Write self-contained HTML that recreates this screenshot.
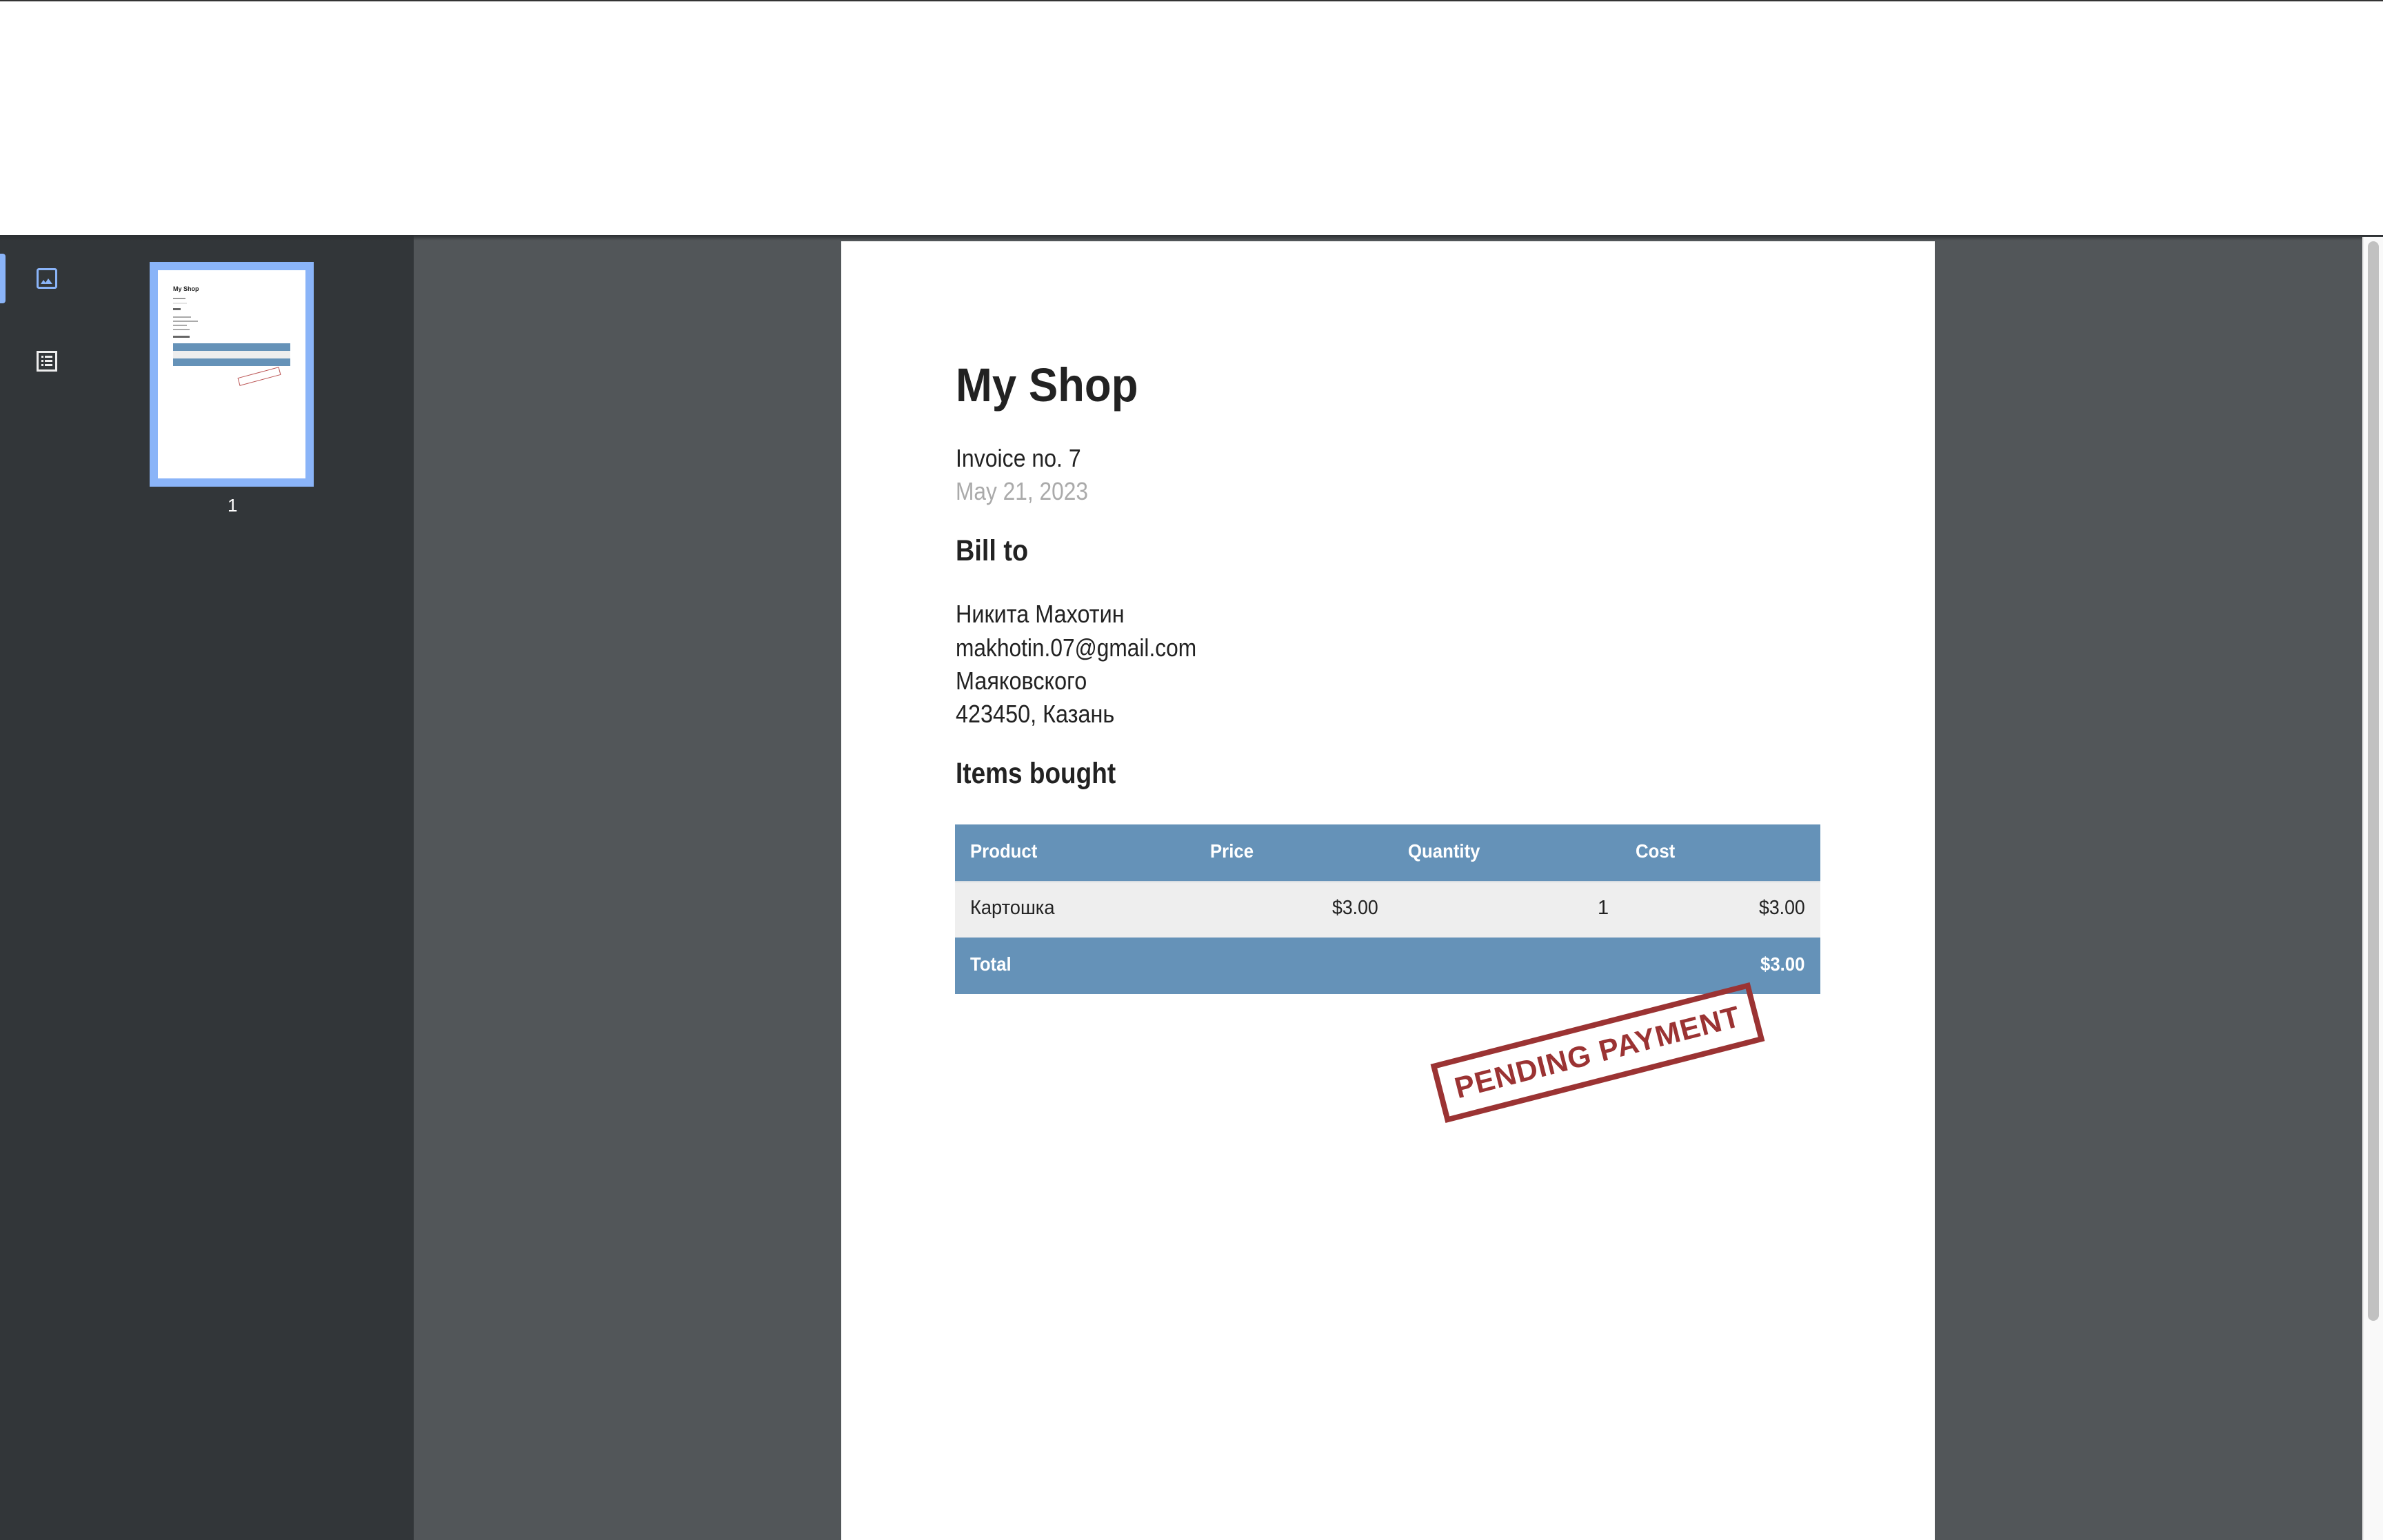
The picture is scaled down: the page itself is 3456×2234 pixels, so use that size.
<!DOCTYPE html>
<html><head><meta charset="utf-8"><style>
*{margin:0;padding:0;box-sizing:border-box}
body{width:3456px;height:2234px;overflow:hidden;background:#fff;position:relative;font-family:"Liberation Sans",Arial,sans-serif}
.abs{position:absolute}
.t{position:absolute;white-space:nowrap;transform-origin:0 0;line-height:1}
</style></head><body>
<div class="abs" style="left:0;top:0;width:3456px;height:2px;background:#333"></div>
<div class="abs" style="left:0;top:341px;width:3456px;height:1893px;background:#525659"></div>
<div class="abs" style="left:0;top:341px;width:600px;height:1893px;background:#323639"></div>
<div class="abs" style="left:0;top:341px;width:3456px;height:8px;background:linear-gradient(#2a2d30,rgba(50,54,57,0))"></div>
<!-- sidebar -->
<div class="abs" style="left:0;top:368px;width:8px;height:72px;background:#8ab4f8;border-radius:0 4px 4px 0"></div>
<svg class="abs" style="left:53px;top:389px" width="30" height="30" viewBox="0 0 30 30"><rect x="1.5" y="1.5" width="27" height="27" rx="2" fill="none" stroke="#8ab4f8" stroke-width="3"/><path d="M6 23 L10 17 L13 21 L17 15 L23 23 Z" fill="#8ab4f8"/></svg>
<svg class="abs" style="left:53px;top:509px" width="30" height="30" viewBox="0 0 30 30"><rect x="1.5" y="1.5" width="27" height="27" fill="none" stroke="#eee" stroke-width="3"/><rect x="7" y="7" width="3" height="3" fill="#eee"/><rect x="12" y="7" width="11" height="3" fill="#eee"/><rect x="7" y="13" width="3" height="3" fill="#eee"/><rect x="12" y="13" width="11" height="3" fill="#eee"/><rect x="7" y="19" width="3" height="3" fill="#eee"/><rect x="12" y="19" width="11" height="3" fill="#eee"/></svg>
<div class="abs" style="left:217px;top:380px;width:238px;height:326px;background:#8ab4f8"></div>
<div class="abs" style="left:229px;top:392px;width:214px;height:302px;background:#fff">
 <div class="abs" style="left:22px;top:22px;font-size:9px;font-weight:bold;color:#222">My Shop</div>
 <div class="abs" style="left:22px;top:40px;width:18px;height:2px;background:#999"></div>
 <div class="abs" style="left:22px;top:47px;width:20px;height:2px;background:#e4e4e4"></div>
 <div class="abs" style="left:22px;top:55px;width:11px;height:3px;background:#666"></div>
 <div class="abs" style="left:22px;top:67px;width:26px;height:2px;background:#aaa"></div>
 <div class="abs" style="left:22px;top:73px;width:36px;height:2px;background:#aaa"></div>
 <div class="abs" style="left:22px;top:79px;width:20px;height:2px;background:#aaa"></div>
 <div class="abs" style="left:22px;top:85px;width:24px;height:2px;background:#aaa"></div>
 <div class="abs" style="left:22px;top:95px;width:24px;height:3px;background:#666"></div>
 <div class="abs" style="left:22px;top:106px;width:170px;height:11px;background:#6592b8"></div>
 <div class="abs" style="left:22px;top:117px;width:170px;height:11px;background:#eee"></div>
 <div class="abs" style="left:22px;top:128px;width:170px;height:11px;background:#6592b8"></div>
 <div class="abs" style="left:116px;top:148px;width:62px;height:12px;border:1px solid #b55;transform:rotate(-15deg)"></div>
</div>
<div class="t" style="left:330px;top:720px;font-size:26px;color:#fff">1</div>
<!-- scrollbar -->
<div class="abs" style="left:3426px;top:344px;width:30px;height:1890px;background:#f9f9f9;border-left:2px solid #e8e8e8"></div>
<div class="abs" style="left:3434px;top:350px;width:16px;height:1566px;background:#c1c1c1;border-radius:8px"></div>
<!-- page -->
<div class="abs" style="left:1220px;top:350px;width:1586px;height:1884px;background:#fff"></div>
<div class="t" style="left:1386px;top:534px;font-size:69px;font-weight:bold;color:#222;transform:scaleX(0.92);line-height:0.73">My Shop</div>
<div class="t" style="left:1386px;top:651px;font-size:36px;color:#222;transform:scaleX(0.89);line-height:0.75">Invoice no. 7</div>
<div class="t" style="left:1386px;top:699px;font-size:36px;color:#aaa;transform:scaleX(0.88);line-height:0.75">May 21, 2023</div>
<div class="t" style="left:1386px;top:784px;font-size:43px;font-weight:bold;color:#222;transform:scaleX(0.88);line-height:0.73">Bill to</div>
<div class="t" style="left:1386px;top:877px;font-size:36px;color:#222;transform:scaleX(0.9);line-height:0.75">Никита Махотин</div>
<div class="t" style="left:1386px;top:926px;font-size:36px;color:#222;transform:scaleX(0.88);line-height:0.75">makhotin.07@gmail.com</div>
<div class="t" style="left:1386px;top:974px;font-size:36px;color:#222;transform:scaleX(0.9);line-height:0.75">Маяковского</div>
<div class="t" style="left:1386px;top:1022px;font-size:36px;color:#222;transform:scaleX(0.9);line-height:0.75">423450, Казань</div>
<div class="t" style="left:1386px;top:1107px;font-size:43px;font-weight:bold;color:#222;transform:scaleX(0.86);line-height:0.73">Items bought</div>
<!-- table -->
<div class="abs" style="left:1385px;top:1196px;width:1255px;height:82px;background:#6592b8"></div>
<div class="abs" style="left:1385px;top:1278px;width:1255px;height:82px;background:#eee;border-top:2px solid #d8dde2"></div>
<div class="abs" style="left:1385px;top:1360px;width:1255px;height:82px;background:#6592b8"></div>
<div class="t" style="left:1407px;top:1221px;font-size:28px;font-weight:bold;color:#fff;transform:scaleX(0.92)">Product</div>
<div class="t" style="left:1755px;top:1221px;font-size:28px;font-weight:bold;color:#fff;transform:scaleX(0.92)">Price</div>
<div class="t" style="left:2042px;top:1221px;font-size:28px;font-weight:bold;color:#fff;transform:scaleX(0.92)">Quantity</div>
<div class="t" style="left:2372px;top:1221px;font-size:28px;font-weight:bold;color:#fff;transform:scaleX(0.92)">Cost</div>
<div class="t" style="left:1407px;top:1303px;font-size:29px;color:#222;transform:scaleX(0.94)">Картошка</div>
<div class="t" style="left:1932px;top:1303px;font-size:29px;color:#222;transform:scaleX(0.92)">$3.00</div>
<div class="t" style="left:2317px;top:1303px;font-size:29px;color:#222">1</div>
<div class="t" style="left:2551px;top:1303px;font-size:29px;color:#222;transform:scaleX(0.92)">$3.00</div>
<div class="t" style="left:1407px;top:1385px;font-size:28px;font-weight:bold;color:#fff;transform:scaleX(0.92)">Total</div>
<div class="t" style="left:2553px;top:1385px;font-size:28px;font-weight:bold;color:#fff;transform:scaleX(0.92)">$3.00</div>
<!-- stamp -->
<div class="abs" style="left:2078px;top:1483px;width:478px;height:88px;border:8px solid #9b3333;transform:rotate(-14.4deg);display:flex;align-items:center;justify-content:center">
 <span style="font-size:43px;font-weight:bold;color:#9b3333;letter-spacing:1px;white-space:nowrap">PENDING PAYMENT</span>
</div>
</body></html>
